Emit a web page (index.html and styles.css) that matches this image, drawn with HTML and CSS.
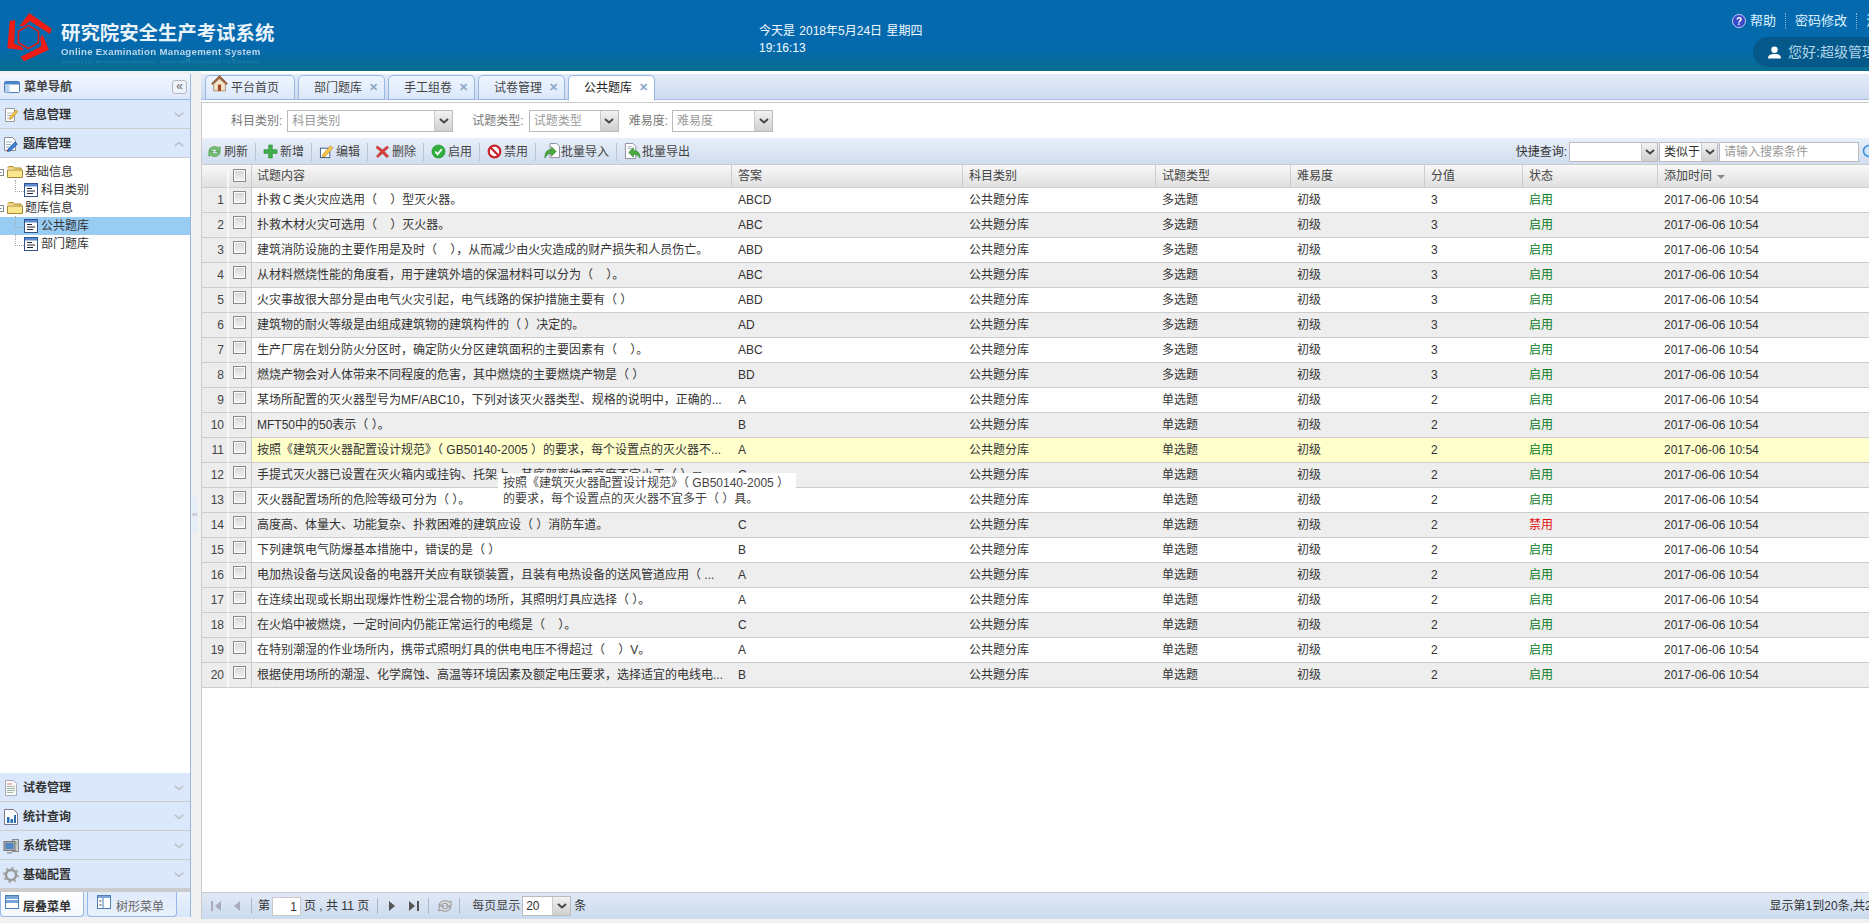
FILE: index.html
```html
<!DOCTYPE html>
<html lang="zh-CN">
<head>
<meta charset="utf-8">
<title>研究院安全生产考试系统</title>
<link rel="stylesheet" href="styles.css">
</head>
<body>
<svg class="defs" aria-hidden="true">
  <defs>
    <symbol id="chev" viewBox="0 0 10 6"><path d="M1 1l4 3.5L9 1" fill="none" stroke="#444" stroke-width="2"/></symbol>
    <symbol id="chevl" viewBox="0 0 14 8"><path d="M1 1l6 5 6-5" fill="none" stroke="#bdc3cc" stroke-width="2.4"/></symbol>
    <symbol id="chevu" viewBox="0 0 14 8"><path d="M1 7l6-5 6 5" fill="none" stroke="#bdc3cc" stroke-width="2.4"/></symbol>
    <symbol id="nav" viewBox="0 0 16 16"><rect x="0.5" y="2.5" width="15" height="11" rx="1" fill="#fff" stroke="#4a7ebb"/><rect x="1" y="3" width="14" height="2.5" fill="#4a86c8"/><rect x="1" y="5.5" width="4.5" height="8" fill="#b9d2ee"/></symbol>
    <symbol id="note" viewBox="0 0 16 16"><path d="M2.5 1.5h9v13h-9z" fill="#fff" stroke="#999"/><path d="M4 6h6M4 8.500h5M4 11h6" stroke="#bbb"/><path d="M7 10l6-7 2 1.500-6 7-2.500 1z" fill="#f0c040" stroke="#b8862b" stroke-width=".6"/></symbol>
    <symbol id="bank" viewBox="0 0 16 16"><path d="M1.500 1.500h8l3 3v10h-11z" fill="#fff" stroke="#8a9099"/><path d="M3 6h6M3 8.500h5M3 11h3" stroke="#9bb"/><path d="M5 13l7-7 2.500 2-7 7-3 .5z" fill="#3d7fd0" stroke="#1f4f90" stroke-width=".6"/><path d="M4.500 13.500l-1 2 2-.5z" fill="#d33"/></symbol>
    <symbol id="paper" viewBox="0 0 16 16"><path d="M2.500 .5h8l3 3v12h-11z" fill="#fafafa" stroke="#aab"/><path d="M4 4h5" stroke="#d77"/><path d="M4 6.500h8M4 8.500h8M4 10.500h8M4 12.500h6" stroke="#9cb9a5"/></symbol>
    <symbol id="stat" viewBox="0 0 16 16"><path d="M1.500 .5h9l4 4v11h-13z" fill="#fff" stroke="#778"/><path d="M4 8h2.500v6H4zM7.500 10H10v4H7.500zM11 6h2v8h-2z" fill="#2f6db3"/></symbol>
    <symbol id="sys" viewBox="0 0 16 16"><rect x="9.500" y="1.500" width="6" height="12" fill="#ccc" stroke="#888"/><rect x="1" y="3.500" width="11" height="9" fill="#aaa" stroke="#777"/><rect x="2.500" y="5" width="8" height="6" fill="#4f86c6"/><path d="M4 14h5v1.500H4z" fill="#999"/><rect x="12" y="5" width="2" height="1" fill="#5b5"/></symbol>
    <symbol id="gear" viewBox="0 0 16 16"><circle cx="8" cy="8" r="5" fill="none" stroke="#999" stroke-width="2.500"/><circle cx="8" cy="8" r="7" fill="none" stroke="#aaa" stroke-width="2" stroke-dasharray="2.500 3"/></symbol>
    <symbol id="layers" viewBox="0 0 14 14"><rect x=".5" y=".5" width="13" height="13" fill="#fff" stroke="#4a7ebb"/><rect x="1" y="1" width="12" height="3" fill="#7aa5d8"/><rect x="1" y="5" width="12" height="3" fill="#7aa5d8"/></symbol>
    <symbol id="treei" viewBox="0 0 14 14"><rect x=".5" y=".5" width="13" height="13" fill="#fff" stroke="#4a7ebb"/><rect x="1" y="1" width="12" height="2" fill="#7aa5d8"/><path d="M6 3v10" stroke="#4a7ebb"/><path d="M2.500 5h2v2h-2zM2.500 9h2v2h-2z" fill="#999"/></symbol>
    <symbol id="folder" viewBox="0 0 16 14"><path d="M1 3.500V2.500l1-1h4l1.500 1.500H14v2" fill="#f5d76e" stroke="#a88a2c"/><path d="M.5 12.500V5h15v7.500z" fill="#fbe58e" stroke="#a88a2c"/></symbol>
    <symbol id="file" viewBox="0 0 14 14"><rect x=".5" y=".5" width="13" height="13" fill="#fff" stroke="#30518a"/><rect x="1" y="1" width="12" height="2.500" fill="#5a8ad0"/><path d="M3 5.500h5M3 8h8M3 10.500h6" stroke="#223"/></symbol>
    <symbol id="refresh" viewBox="0 0 16 16"><path d="M2 7a6 5 0 0 1 10-3l2-1v5H9l2-1.500A4 3 0 0 0 4.500 7z" fill="#7cc576" stroke="#3f8f3a" stroke-width=".7"/><path d="M14 9a6 5 0 0 1-10 3l-2 1V8h5l-2 1.500A4 3 0 0 0 11.500 9z" fill="#7cc576" stroke="#3f8f3a" stroke-width=".7"/></symbol>
    <symbol id="plus" viewBox="0 0 16 16"><path d="M6 1h4v5h5v4h-5v5H6v-5H1V6h5z" fill="#3fae4a" stroke="#2b8a36" stroke-width=".6"/></symbol>
    <symbol id="edit" viewBox="0 0 16 16"><rect x="1.500" y="4.500" width="10" height="10" fill="#fff" stroke="#35567f"/><path d="M4 11l8-9 3 2-8 9-3.500 1z" fill="#f3c64a" stroke="#b8862b" stroke-width=".6"/></symbol>
    <symbol id="del" viewBox="0 0 16 16"><path d="M2.500 2L8 6l5-4 1.500 2L10 8l4.500 5-2 1.500L8 10l-5 4.500L1.500 13 6 8 1 4z" fill="#d8413a" stroke="#a5211c" stroke-width=".5"/></symbol>
    <symbol id="ok" viewBox="0 0 16 16"><circle cx="8" cy="8" r="7" fill="#2fae3b" stroke="#1f8a2b" stroke-width=".6"/><path d="M4.500 8l2.500 3 4.500-5.500" fill="none" stroke="#fff" stroke-width="2"/></symbol>
    <symbol id="no" viewBox="0 0 16 16"><circle cx="8" cy="8" r="6.200" fill="#fff" stroke="#c9252b" stroke-width="2.400"/><path d="M3.500 3.500l9 9" stroke="#c9252b" stroke-width="2.400"/></symbol>
    <symbol id="imp" viewBox="0 0 18 18"><path d="M7.500 .5h7l3 3v12h-10z" fill="#fff" stroke="#889"/><path d="M2 16c0-6 2-9 7-9V4l5 5-5 5v-3c-3 0-5 1-7 5z" fill="#49a93f" stroke="#2f7d29" stroke-width=".6"/></symbol>
    <symbol id="exp" viewBox="0 0 18 18"><path d="M1.500 .5h8l3 3v13h-11z" fill="#fff" stroke="#889"/><path d="M4 4h4M4 6h6" stroke="#9ab"/><path d="M17 16c0-5-2-8-7-8V5L5 10l5 5v-3c3 0 5 1 7 4z" fill="#49a93f" stroke="#2f7d29" stroke-width=".6"/></symbol>
    <symbol id="first" viewBox="0 0 12 12"><rect x="1" y="1" width="2" height="10" fill="#aab"/><path d="M11 1v10L5 6z" fill="#aab"/></symbol>
    <symbol id="prev" viewBox="0 0 12 12"><path d="M9 1v10L3 6z" fill="#aab"/></symbol>
    <symbol id="next" viewBox="0 0 12 12"><path d="M3 1v10l6-5z" fill="#555"/></symbol>
    <symbol id="last" viewBox="0 0 12 12"><path d="M1 1v10l6-5z" fill="#555"/><rect x="9" y="1" width="2" height="10" fill="#555"/></symbol>
    <symbol id="reload" viewBox="0 0 16 16"><path d="M2 7a6 5 0 0 1 10-3l2-1v5H9l2-1.500A4 3 0 0 0 4.500 7z" fill="#ddd" stroke="#777" stroke-width=".7"/><path d="M14 9a6 5 0 0 1-10 3l-2 1V8h5l-2 1.500A4 3 0 0 0 11.500 9z" fill="#ddd" stroke="#777" stroke-width=".7"/></symbol>
  </defs>
</svg>
<div class="page">
  <header class="top">
    <div class="brand">
      <svg class="logo" viewBox="0 0 64 58" aria-hidden="true">
        <g fill="#ee1c14">
          <path d="M19.300 18.300L29.300 5l22.400 15.700-1.700 5.300L30 13.300l-6.700 5z"/>
          <path d="M19.300 18.300L29.300 5l22.400 15.700-1.700 5.300L30 13.300l-6.700 5z" transform="rotate(120 28.500 29)"/>
          <path d="M19.300 18.300L29.300 5l22.400 15.700-1.700 5.300L30 13.300l-6.700 5z" transform="rotate(240 28.500 29)"/>
        </g>
        <path d="M28.500 17.500l10 5.750v11.500l-10 5.750-10-5.750v-11.500z" fill="none" stroke="#d9201c" stroke-width="1.600"/>
      </svg>
      <div class="brand-text">
        <div class="brand-cn">研究院安全生产考试系统</div>
        <div class="brand-en">Online Examination Management System</div>
      </div>
    </div>
    <div class="clock">今天是 2018年5月24日 星期四<br>19:16:13</div>
    <div class="account">
      <div class="links">
        <svg class="help" viewBox="0 0 14 14" aria-hidden="true"><circle cx="7" cy="7" r="6.500" fill="#3748c8" stroke="#c5cdf0"/><text x="7" y="10.500" class="help-q">?</text></svg>
        <span class="link">帮助</span><span class="link link-sep">密码修改</span><span class="link link-sep">注销</span>
      </div>
      <div class="pill">
        <svg class="user" viewBox="0 0 14 14" aria-hidden="true"><circle cx="7" cy="4" r="3.500" fill="#fff"/><path d="M0 13.500c0-4 3-5 7-5s7 1 7 5z" fill="#fff"/></svg>
        <span>您好:超级管理员</span>
      </div>
    </div>
  </header>
  <main class="main">
    <aside class="west">
      <div class="west-title">
        <svg class="ic16"><use href="#nav"/></svg><span>菜单导航</span>
        <span class="collapse">«</span>
      </div>
      <div class="acc"><svg class="ic16"><use href="#note"/></svg><span>信息管理</span><svg class="acc-arrow"><use href="#chevl"/></svg></div>
      <div class="acc"><svg class="ic16"><use href="#bank"/></svg><span>题库管理</span><svg class="acc-arrow"><use href="#chevu"/></svg></div>
      <div class="tree">
        <div class="node"><span class="exp">-</span><svg class="folder"><use href="#folder"/></svg><span>基础信息</span></div>
        <div class="node node-leaf"><svg class="file"><use href="#file"/></svg><span>科目类别</span></div>
        <div class="node"><span class="exp">-</span><svg class="folder"><use href="#folder"/></svg><span>题库信息</span></div>
        <div class="node node-leaf node-sel"><svg class="file"><use href="#file"/></svg><span>公共题库</span></div>
        <div class="node node-leaf"><svg class="file"><use href="#file"/></svg><span>部门题库</span></div>
      </div>
      <div class="acc"><svg class="ic16"><use href="#paper"/></svg><span>试卷管理</span><svg class="acc-arrow"><use href="#chevl"/></svg></div>
      <div class="acc"><svg class="ic16"><use href="#stat"/></svg><span>统计查询</span><svg class="acc-arrow"><use href="#chevl"/></svg></div>
      <div class="acc"><svg class="ic16"><use href="#sys"/></svg><span>系统管理</span><svg class="acc-arrow"><use href="#chevl"/></svg></div>
      <div class="acc acc-last"><svg class="ic16"><use href="#gear"/></svg><span>基础配置</span><svg class="acc-arrow"><use href="#chevl"/></svg></div>
      <div class="west-tabs">
        <div class="wtab wtab-on"><svg class="ic14"><use href="#layers"/></svg><span>层叠菜单</span></div>
        <div class="wtab"><svg class="ic14"><use href="#treei"/></svg><span>树形菜单</span></div>
      </div>
    </aside>
    <div class="split"><span class="handle">‹‹</span></div>
    <section class="center">
      <div class="tabs">
        <div class="tab tab-home"><svg class="home" viewBox="0 0 16 16" aria-hidden="true"><path d="M8 .5L.5 8l1 1L8 3l6.500 6 1-1z" fill="#a8643a" stroke="#6b3d20" stroke-width=".5"/><path d="M2.500 8.500L8 3.500l5.500 5V15h-11z" fill="#f3e4c8" stroke="#8c6a45" stroke-width=".6"/><rect x="6.500" y="9" width="3" height="6" fill="#a4492a"/></svg><span>平台首页</span></div>
        <div class="tab">部门题库<span class="x">✕</span></div>
        <div class="tab">手工组卷<span class="x">✕</span></div>
        <div class="tab">试卷管理<span class="x">✕</span></div>
        <div class="tab tab-on">公共题库<span class="x">✕</span></div>
      </div>
      <div class="filter">
        <label class="flabel flabel-1">科目类别:</label>
        <div class="combo combo-subj"><span class="combo-text ph">科目类别</span><span class="combo-arrow"><svg class="chev"><use href="#chev"/></svg></span></div>
        <label class="flabel flabel-2">试题类型:</label>
        <div class="combo combo-type"><span class="combo-text ph">试题类型</span><span class="combo-arrow"><svg class="chev"><use href="#chev"/></svg></span></div>
        <label class="flabel flabel-3">难易度:</label>
        <div class="combo combo-diff"><span class="combo-text ph">难易度</span><span class="combo-arrow"><svg class="chev"><use href="#chev"/></svg></span></div>
      </div>
      <div class="toolbar">
        <span class="tbtn"><svg class="ic16"><use href="#refresh"/></svg>刷新</span><i class="tsep"></i>
        <span class="tbtn"><svg class="ic16"><use href="#plus"/></svg>新增</span><i class="tsep"></i>
        <span class="tbtn"><svg class="ic16"><use href="#edit"/></svg>编辑</span><i class="tsep"></i>
        <span class="tbtn"><svg class="ic16"><use href="#del"/></svg>删除</span><i class="tsep"></i>
        <span class="tbtn"><svg class="ic16"><use href="#ok"/></svg>启用</span><i class="tsep"></i>
        <span class="tbtn"><svg class="ic16"><use href="#no"/></svg>禁用</span><i class="tsep"></i>
        <span class="tbtn tbtn-wide"><svg class="ic18"><use href="#imp"/></svg>批量导入</span><i class="tsep"></i>
        <span class="tbtn tbtn-wide"><svg class="ic18"><use href="#exp"/></svg>批量导出</span>
        <div class="search">
          <span class="search-label">快捷查询:</span>
          <div class="combo combo-q"><span class="combo-text"></span><span class="combo-arrow"><svg class="chev"><use href="#chev"/></svg></span></div>
          <div class="combo combo-like"><span class="combo-text">类似于</span><span class="combo-arrow"><svg class="chev"><use href="#chev"/></svg></span></div>
          <div class="combo combo-input"><span class="combo-text ph">请输入搜索条件</span></div>
          <svg class="lens" viewBox="0 0 16 16" aria-hidden="true"><circle cx="7" cy="7" r="5.500" fill="#cfe6fb" stroke="#3c8fd6" stroke-width="1.500"/><path d="M11 11l4 4" stroke="#777" stroke-width="2"/></svg>
        </div>
      </div>
      <div class="grid-wrap">
        <table class="grid">
          <colgroup>
            <col class="c-num"><col class="c-chk"><col class="c-txt"><col class="c-ans"><col class="c-sub"><col class="c-typ"><col class="c-dif"><col class="c-sco"><col class="c-sta"><col class="c-tim">
          </colgroup>
          <thead>
            <tr><th class="num"></th><th class="chk"><span class="box"></span></th><th>试题内容</th><th>答案</th><th>科目类别</th><th>试题类型</th><th>难易度</th><th>分值</th><th>状态</th><th>添加时间 <span class="sort"></span></th></tr>
          </thead>
          <tbody>
            <tr><td class="num">1</td><td class="chk"><span class="box"></span></td><td>扑救Ｃ类火灾应选用（&nbsp;&nbsp;&nbsp;&nbsp;）型灭火器。</td><td>ABCD</td><td>公共题分库</td><td>多选题</td><td>初级</td><td>3</td><td class="on">启用</td><td>2017-06-06 10:54</td></tr>
            <tr><td class="num">2</td><td class="chk"><span class="box"></span></td><td>扑救木材火灾可选用（&nbsp;&nbsp;&nbsp;&nbsp;）灭火器。</td><td>ABC</td><td>公共题分库</td><td>多选题</td><td>初级</td><td>3</td><td class="on">启用</td><td>2017-06-06 10:54</td></tr>
            <tr><td class="num">3</td><td class="chk"><span class="box"></span></td><td>建筑消防设施的主要作用是及时（&nbsp;&nbsp;&nbsp;&nbsp;），从而减少由火灾造成的财产损失和人员伤亡。</td><td>ABD</td><td>公共题分库</td><td>多选题</td><td>初级</td><td>3</td><td class="on">启用</td><td>2017-06-06 10:54</td></tr>
            <tr><td class="num">4</td><td class="chk"><span class="box"></span></td><td>从材料燃烧性能的角度看，用于建筑外墙的保温材料可以分为（&nbsp;&nbsp;&nbsp;&nbsp;）。</td><td>ABC</td><td>公共题分库</td><td>多选题</td><td>初级</td><td>3</td><td class="on">启用</td><td>2017-06-06 10:54</td></tr>
            <tr><td class="num">5</td><td class="chk"><span class="box"></span></td><td>火灾事故很大部分是由电气火灾引起，电气线路的保护措施主要有（ ）</td><td>ABD</td><td>公共题分库</td><td>多选题</td><td>初级</td><td>3</td><td class="on">启用</td><td>2017-06-06 10:54</td></tr>
            <tr><td class="num">6</td><td class="chk"><span class="box"></span></td><td>建筑物的耐火等级是由组成建筑物的建筑构件的（ ）决定的。</td><td>AD</td><td>公共题分库</td><td>多选题</td><td>初级</td><td>3</td><td class="on">启用</td><td>2017-06-06 10:54</td></tr>
            <tr><td class="num">7</td><td class="chk"><span class="box"></span></td><td>生产厂房在划分防火分区时，确定防火分区建筑面积的主要因素有（&nbsp;&nbsp;&nbsp;&nbsp;）。</td><td>ABC</td><td>公共题分库</td><td>多选题</td><td>初级</td><td>3</td><td class="on">启用</td><td>2017-06-06 10:54</td></tr>
            <tr><td class="num">8</td><td class="chk"><span class="box"></span></td><td>燃烧产物会对人体带来不同程度的危害，其中燃烧的主要燃烧产物是（ ）</td><td>BD</td><td>公共题分库</td><td>多选题</td><td>初级</td><td>3</td><td class="on">启用</td><td>2017-06-06 10:54</td></tr>
            <tr><td class="num">9</td><td class="chk"><span class="box"></span></td><td>某场所配置的灭火器型号为MF/ABC10，下列对该灭火器类型、规格的说明中，正确的...</td><td>A</td><td>公共题分库</td><td>单选题</td><td>初级</td><td>2</td><td class="on">启用</td><td>2017-06-06 10:54</td></tr>
            <tr><td class="num">10</td><td class="chk"><span class="box"></span></td><td>MFT50中的50表示（ ）。</td><td>B</td><td>公共题分库</td><td>单选题</td><td>初级</td><td>2</td><td class="on">启用</td><td>2017-06-06 10:54</td></tr>
            <tr class="hover"><td class="num">11</td><td class="chk"><span class="box"></span></td><td>按照《建筑灭火器配置设计规范》（ GB50140-2005 ）的要求，每个设置点的灭火器不...</td><td>A</td><td>公共题分库</td><td>单选题</td><td>初级</td><td>2</td><td class="on">启用</td><td>2017-06-06 10:54</td></tr>
            <tr><td class="num">12</td><td class="chk"><span class="box"></span></td><td>手提式灭火器已设置在灭火箱内或挂钩、托架上，其底部离地面高度不宜小于（ ）m</td><td>C</td><td>公共题分库</td><td>单选题</td><td>初级</td><td>2</td><td class="on">启用</td><td>2017-06-06 10:54</td></tr>
            <tr><td class="num">13</td><td class="chk"><span class="box"></span></td><td>灭火器配置场所的危险等级可分为（ ）。</td><td>A</td><td>公共题分库</td><td>单选题</td><td>初级</td><td>2</td><td class="on">启用</td><td>2017-06-06 10:54</td></tr>
            <tr><td class="num">14</td><td class="chk"><span class="box"></span></td><td>高度高、体量大、功能复杂、扑救困难的建筑应设（ ）消防车道。</td><td>C</td><td>公共题分库</td><td>单选题</td><td>初级</td><td>2</td><td class="off">禁用</td><td>2017-06-06 10:54</td></tr>
            <tr><td class="num">15</td><td class="chk"><span class="box"></span></td><td>下列建筑电气防爆基本措施中，错误的是（ ）</td><td>B</td><td>公共题分库</td><td>单选题</td><td>初级</td><td>2</td><td class="on">启用</td><td>2017-06-06 10:54</td></tr>
            <tr><td class="num">16</td><td class="chk"><span class="box"></span></td><td>电加热设备与送风设备的电器开关应有联锁装置，且装有电热设备的送风管道应用（ ...</td><td>A</td><td>公共题分库</td><td>单选题</td><td>初级</td><td>2</td><td class="on">启用</td><td>2017-06-06 10:54</td></tr>
            <tr><td class="num">17</td><td class="chk"><span class="box"></span></td><td>在连续出现或长期出现爆炸性粉尘混合物的场所，其照明灯具应选择（ ）。</td><td>A</td><td>公共题分库</td><td>单选题</td><td>初级</td><td>2</td><td class="on">启用</td><td>2017-06-06 10:54</td></tr>
            <tr><td class="num">18</td><td class="chk"><span class="box"></span></td><td>在火焰中被燃烧，一定时间内仍能正常运行的电缆是（&nbsp;&nbsp;&nbsp;&nbsp;）。</td><td>C</td><td>公共题分库</td><td>单选题</td><td>初级</td><td>2</td><td class="on">启用</td><td>2017-06-06 10:54</td></tr>
            <tr><td class="num">19</td><td class="chk"><span class="box"></span></td><td>在特别潮湿的作业场所内，携带式照明灯具的供电电压不得超过（&nbsp;&nbsp;&nbsp;&nbsp;）V。</td><td>A</td><td>公共题分库</td><td>单选题</td><td>初级</td><td>2</td><td class="on">启用</td><td>2017-06-06 10:54</td></tr>
            <tr><td class="num">20</td><td class="chk"><span class="box"></span></td><td>根据使用场所的潮湿、化学腐蚀、高温等环境因素及额定电压要求，选择适宜的电线电...</td><td>B</td><td>公共题分库</td><td>单选题</td><td>初级</td><td>2</td><td class="on">启用</td><td>2017-06-06 10:54</td></tr>
          </tbody>
        </table>
        <div class="tip">按照《建筑灭火器配置设计规范》（ GB50140-2005 ）<br>的要求，每个设置点的灭火器不宜多于（ ）具。</div>
      </div>
      <div class="pager">
        <svg class="pi pi-first"><use href="#first"/></svg>
        <svg class="pi pi-prev"><use href="#prev"/></svg>
        <i class="psep"></i>
        <span>第</span><span class="pnum">1</span><span>页 , 共 11 页</span>
        <i class="psep"></i>
        <svg class="pi pi-next"><use href="#next"/></svg>
        <svg class="pi pi-last"><use href="#last"/></svg>
        <i class="psep"></i>
        <svg class="ic16 pi-reload"><use href="#reload"/></svg>
        <i class="psep psep-r"></i>
        <span class="psize-label">每页显示</span>
        <div class="combo combo-size"><span class="combo-text">20</span><span class="combo-arrow"><svg class="chev"><use href="#chev"/></svg></span></div>
        <span>条</span>
        <span class="pinfo">显示第1到20条,共220条</span>
      </div>
    </section>
  </main>
</div>
</body>
</html>
```
FILE: styles.css
```css
* { box-sizing: border-box; }
html, body { margin: 0; height: 923px; overflow: hidden; }
body { background: #f1f1f1; font: 12px/16px "Liberation Sans", "Noto Sans CJK SC", sans-serif; color: #333; }
.defs { position: absolute; width: 0; height: 0; }
.page { width: 1905px; height: 923px; }
svg { display: block; flex: none; }
.ic16 { width: 16px; height: 16px; }
.ic18 { width: 18px; height: 18px; }
.ic14 { width: 14px; height: 14px; }

/* header */
.top { height: 71px; display: flex; color: #fff; background: linear-gradient(#0569ae 0, #0569ae 65%, #066d8f 100%); }
.brand { width: 759px; display: flex; padding-top: 8px; }
.logo { width: 64px; height: 58px; }
.brand-text { margin: 13px 0 0 -3px; }
.brand-cn { font-size: 19.4px; line-height: 24px; font-weight: bold; color: #e9f3fa; white-space: nowrap; }
.brand-en { font-size: 9.6px; line-height: 12px; margin-top: 1px; font-weight: bold; color: #b8d6ea; letter-spacing: .33px; white-space: nowrap; -webkit-box-reflect: below 0 linear-gradient(transparent 40%, rgba(255,255,255,.3)); }
.clock { padding-top: 23px; line-height: 16.500px; color: #f2fbff; width: 500px; word-spacing: 1px; }
.account { margin-left: auto; width: 173px; display: flex; flex-direction: column; align-items: flex-end; }
.links { display: flex; align-items: center; height: 37px; padding-top: 4px; width: 173px; font-size: 13px; }
.help { width: 14px; height: 14px; margin-right: 4px; }
.help-q { font-size: 10px; font-weight: bold; fill: #fff; text-anchor: middle; }
.link { color: #dff3ff; }
.link-sep { margin-left: 9px; padding-left: 9px; border-left: 1px dotted #8cb6d2; }
.pill { width: 152px; height: 30px; border-radius: 15px 0 0 15px; background: #04598a; display: flex; align-items: center; padding-left: 15px; gap: 7px; font-size: 14px; color: #b3d5e9; white-space: nowrap; overflow: hidden; }
.user { width: 13px; height: 13px; }

/* west */
.main { display: flex; height: 848px; }
.west { width: 191px; flex: none; margin: 3px 0 2px; display: flex; flex-direction: column; border-right: 1px solid #95b8e7; background: #fff; }
.west-title { height: 26px; flex: none; display: flex; align-items: center; gap: 4px; padding: 1px 0 0 4px; font-weight: bold; color: #444; background: linear-gradient(#f3f7ff, #dce8fa); border-bottom: 1px solid #95b8e7; position: relative; }
.collapse { position: absolute; left: 172px; top: 6px; width: 15px; height: 14px; border: 1px solid #b8b8b8; border-radius: 3px; background: #eef3fb; font: 12px/11px "Liberation Sans", sans-serif; text-align: center; color: #666; }
.acc { height: 29px; flex: none; display: flex; align-items: center; gap: 4px; padding: 2px 0 0 3px; font-weight: bold; color: #333; background: #dbe8fb; border-bottom: 1px solid #ccc; }
.acc-arrow { width: 10px; height: 6px; margin-left: auto; margin-right: 6px; }
.acc-last { border-bottom: 4px solid #ccc; height: 32px; }
.tree { flex: 1; padding-top: 5px; overflow: hidden; background: #fff; }
.node { height: 18px; display: flex; align-items: center; white-space: nowrap; color: #333; }
.node-leaf { padding-left: 24px; gap: 3px; position: relative; }
.node-leaf::before { content: ""; position: absolute; left: 15px; top: -1px; width: 8px; height: 11px; border-left: 1px dotted #aaa; border-bottom: 1px dotted #aaa; }
.node-sel { background: #99ccf3; }
.exp { width: 7px; height: 7px; flex: none; border: 1px solid #888; font: 8px/4px "Liberation Mono", monospace; text-align: center; margin-left: -3px; }
.folder { width: 16px; height: 14px; margin: 0 2px 0 3px; }
.file { width: 14px; height: 14px; }
.west-tabs { height: 25px; flex: none; display: flex; gap: 3px; background: linear-gradient(#e9f1fc, #d9e7fa); }
.wtab { width: 90px; height: 25px; display: flex; padding: 3px 0 0 9px; gap: 5px; color: #666; border: 1px solid #95b8e7; border-top: 0; border-radius: 0 0 4px 4px; background: linear-gradient(#dfeafb, #e9f1fc); align-items: flex-start; }
.wtab span { margin-top: 4px; }
.wtab-on { width: 84px; padding-left: 4px; gap: 4px; color: #333; font-weight: bold; background: linear-gradient(#fff, #f4f8fe); }

.split { width: 10px; flex: none; display: flex; align-items: center; }
.handle { height: 36px; width: 6px; margin: 39px 0 0 1px; background: #e8eef7; font-size: 8px; line-height: 36px; color: #99a; overflow: hidden; }

/* center */
.center { width: 1704px; flex: none; padding-top: 3px; display: flex; flex-direction: column; background: #fff; }
.tabs { height: 26px; flex: none; display: flex; padding: 1px 0 0 4px; gap: 3px; border-bottom: 1px solid #a9bfe2; background: linear-gradient(#e3ebf8, #cddbef); }
.tab { width: 87px; height: 25px; border: 1px solid #95b8e7; border-radius: 5px 5px 0 0; background: linear-gradient(#eff5ff, #dbe8fb); color: #444; padding: 4px 0 0 15px; white-space: nowrap; position: relative; line-height: 17px; }
.tab-home { width: 90px; padding-left: 25px; }
.tab-home .home { position: absolute; left: 5px; top: -1px; width: 17px; height: 17px; }
.tab-on { background: #fff; color: #222; border-bottom-color: #fff; height: 26px; }
.x { position: absolute; left: 70px; top: 3px; font-size: 11px; font-weight: bold; color: #8ba8c8; }
.filter { height: 36px; flex: none; margin-top: 2px; border-top: 1px solid #ccc; border-left: 1px solid #ccc; display: flex; align-items: center; color: #777; background: #fff; }
.flabel-1 { margin-left: 29px; margin-right: 5px; }
.flabel-2 { margin-left: 19px; margin-right: 5px; }
.flabel-3 { margin-left: 10px; margin-right: 4px; }
.combo { height: 22px; display: flex; flex: none; border: 1px solid #bbb; background: #fff; }
.combo-text { flex: 1; padding: 0 4px; line-height: 20px; white-space: nowrap; overflow: hidden; color: #333; }
.ph { color: #999; }
.combo-arrow { width: 18px; flex: none; display: flex; align-items: center; justify-content: center; background: linear-gradient(#f2f2f2, #cfcfcf); border-left: 1px solid #ccc; }
.chev { width: 10px; height: 6px; }
.combo-subj { width: 166px; }
.combo-type { width: 90px; }
.combo-diff { width: 101px; }
.toolbar { height: 26px; flex: none; display: flex; align-items: center; gap: 7px; padding: 1px 27px 0 5px; background: linear-gradient(#e8eff9, #d0ddef); border-left: 1px solid #ccc; color: #444; }
.tbtn { display: flex; align-items: center; gap: 2px; white-space: nowrap; }
.tbtn .ic16 { width: 15px; height: 15px; }
.tbtn .ic18 { width: 17px; height: 17px; }
.tbtn-wide { gap: 1px; }
.tsep { width: 1px; height: 18px; background: #b7c4d6; flex: none; }
.search { margin-left: auto; display: flex; align-items: center; gap: 1px; color: #333; }
.search-label { margin-right: 1px; }
.search .combo { height: 20px; }
.search .combo-text { line-height: 18px; }
.search .combo-arrow { width: 16px; }
.combo-q { width: 89px; }
.combo-like { width: 59px; }
.combo-input { width: 140px; }
.lens { width: 16px; height: 16px; margin-left: 2px; }

/* grid */
.grid-wrap { flex: 1; position: relative; overflow: hidden; border-top: 1px solid #ccc; border-left: 1px solid #ccc; background: #fff; }
.grid { width: 1703px; table-layout: fixed; border-collapse: separate; border-spacing: 0; }
.c-num { width: 27px; }
.c-chk { width: 23px; }
.c-txt { width: 480px; }
.c-ans { width: 231px; }
.c-sub { width: 193px; }
.c-typ { width: 135px; }
.c-dif { width: 134px; }
.c-sco { width: 98px; }
.c-sta { width: 135px; }
.c-tim { width: 247px; }
.grid th { height: 23px; padding: 0 0 0 6px; font-weight: normal; text-align: left; color: #444; background: linear-gradient(#f8f8f8, #e0e0e0); border-right: 1px solid #ccc; border-bottom: 1px solid #ccc; white-space: nowrap; }
.grid td { height: 25px; padding: 0 0 0 6px; color: #333; white-space: nowrap; overflow: hidden; border-bottom: 1px solid #ccc; }
.grid tbody tr:nth-child(even) td { background: #eee; }
.grid tbody tr.hover td { background: #ffc; }
.grid th:nth-child(3), .grid td:nth-child(3) { padding-left: 5px; }
.grid td.num, .grid tbody tr:nth-child(even) td.num, .grid tbody tr.hover td.num { text-align: right; padding: 0 3px 0 0; background: #ececec; border-right: 2px solid #f8f8f8; color: #444; }
.grid th.num { padding: 0; border-right: 2px solid #f8f8f8; }
.grid td.chk, .grid th.chk { padding: 0 0 0 4px; border-right: 1px solid #ccc; vertical-align: top; }
.grid tbody tr td.chk { background: #ededed; }
.box { display: block; width: 13px; height: 13px; margin-top: 3px; border: 1px solid #888; background: linear-gradient(#d4d4d4, #f4f4f4); box-shadow: inset 0 0 0 1px #fff; }
.grid th .box { margin-top: 4px; }
.grid td.on { color: #0a7d1f; }
.grid td.off { color: #e01010; }
.sort { display: inline-block; width: 0; height: 0; margin-left: 2px; border: 4px solid transparent; border-top: 4px solid #888; border-bottom: 0; vertical-align: 1px; }
.tip { position: absolute; left: 296px; top: 308px; width: 298px; height: 35px; padding: 2px 5px; background: #fff; color: #444; white-space: nowrap; }

/* pager */
.pager { height: 27px; flex: none; display: flex; align-items: center; border-top: 1px solid #ccc; border-left: 1px solid #ccc; background: linear-gradient(#e0e9f6, #cbdaee); color: #333; white-space: nowrap; padding-left: 8px; }
.pi { width: 12px; height: 12px; }
.pi-prev { margin-left: 9px; }
.pi-next { margin-left: 2px; }
.pi-last { margin-left: 10px; }
.pi-reload { margin-left: 2px; }
.psep { width: 1px; height: 16px; background: #aab6c8; margin: 0 6px 0 8px; flex: none; }
.psep-r { margin-left: 6px; }
.pnum { width: 29px; height: 19px; margin: 0 3px 0 2px; border: 1px solid #c8c8c8; background: #fff; text-align: right; padding-right: 3px; line-height: 18px; }
.psize-label { margin-left: 6px; margin-right: 2px; color: #444; }
.combo-size { width: 49px; height: 20px; margin-right: 3px; }
.combo-size .combo-text { line-height: 18px; padding: 0 3px; }
.pinfo { margin-left: auto; padding-right: 8px; }
```
